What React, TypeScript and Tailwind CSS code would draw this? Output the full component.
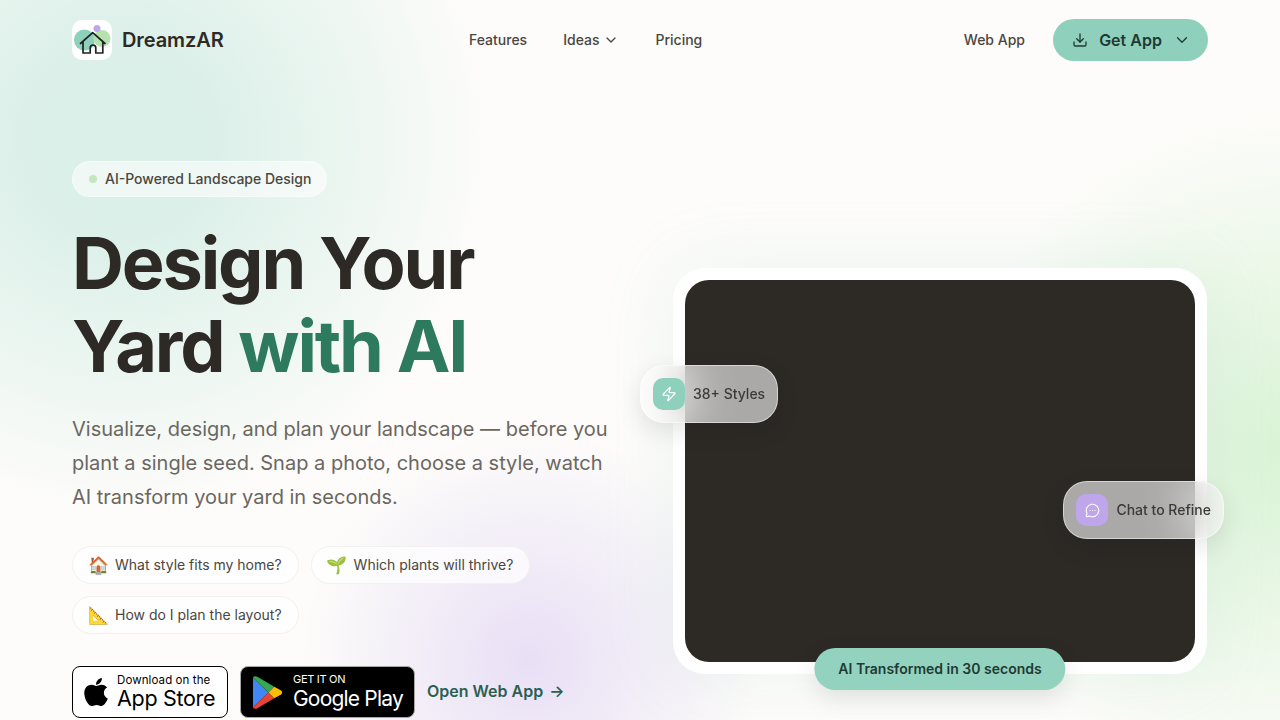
import React from 'react';
import { ChevronDown, Download, MessageCircleMore, Zap } from 'lucide-react';
import { FaApple } from 'react-icons/fa';

const chips = [
  { icon: '🏠', label: 'What style fits my home?' },
  { icon: '🌱', label: 'Which plants will thrive?' },
  { icon: '📐', label: 'How do I plan the layout?' },
];

function Logo() {
  return (
    <svg viewBox="0 0 40 40" className="h-10 w-10 rounded-[10px] bg-white">
      <circle cx="12.500" cy="20" r="10.500" fill="#8fd0bc" />
      <circle cx="30" cy="18.500" r="8.500" fill="#b5e2ae" />
      <circle cx="25" cy="8.500" r="3.500" fill="#bfa6ea" />
      <path
        d="M8.500 23.500 20.700 12.700 33 23.500M11 21.500V33h7.200v-5a2.800 2.800 0 0 1 5.600 0v5h7V21.500"
        fill="none"
        stroke="#1f2421"
        strokeWidth="1.700"
        strokeLinecap="round"
        strokeLinejoin="round"
      />
    </svg>
  );
}

function PlayMark() {
  return (
    <svg viewBox="0 0 32 36" className="h-[35px] w-[31px] shrink-0">
      <path d="M1 2.500 17 18 1 33.500Z" fill="#4285f4" />
      <path d="M1 2.500C2 1 4 1 5.500 1.800L23 12 17 18Z" fill="#34a853" />
      <path d="M1 33.500C2 35 4 35 5.500 34.200L23 24 17 18Z" fill="#ea4335" />
      <path d="M23 12 30 16C31.500 17 31.500 19 30 20L23 24 17 18Z" fill="#fbbc04" />
    </svg>
  );
}

export default function App() {
  return (
    <div className="relative h-screen overflow-hidden bg-[#fdfcfa] font-['Inter',sans-serif] text-[#2d2a26]">
      {/* soft background blobs */}
      <div className="absolute inset-0 bg-[radial-gradient(circle_at_120px_140px,#dbf0e8_0px,#dcf0e9_100px,rgba(220,240,233,0)_370px),radial-gradient(circle_at_530px_660px,#e8dff5_0px,rgba(232,223,245,0)_230px),radial-gradient(circle_at_1290px_450px,#d9f3d5_0px,rgba(217,243,213,0)_340px)]" />

      <div className="relative px-[72px]">
        <header className="flex h-20 items-center">
          <div className="flex w-[397px] items-center gap-2.5">
            <Logo />
            <span className="text-[20px] font-semibold tracking-[-0.1px]">DreamzAR</span>
          </div>
          <nav className="flex items-center gap-9 text-sm font-medium text-[#4a4640]">
            <span>Features</span>
            <span className="flex items-center gap-1">
              Ideas <ChevronDown size={16} />
            </span>
            <span>Pricing</span>
          </nav>
          <div className="ml-auto flex items-center gap-7">
            <span className="text-sm font-medium text-[#4a4640]">Web App</span>
            <button className="flex h-[42px] w-[155px] items-center justify-center gap-[11px] rounded-full bg-[#8fd0bc] pl-0.5 text-base font-semibold text-[#1f3a33]">
              <Download size={16} />
              Get App
              <ChevronDown size={18} strokeWidth={1.75} />
            </button>
          </div>
        </header>

        <main className="grid grid-cols-[601px_534px] pt-[81px]">
          <div>
            <div className="inline-flex h-9 items-center gap-2 rounded-full border border-white/40 bg-white/55 pr-[15px] pl-4 text-sm font-medium text-[#4a4640]">
              <span className="h-2 w-2 rounded-full bg-[#c4e8be]" />
              AI-Powered Landscape Design
            </div>
            <h1 className="mt-6 text-[72px] leading-[83px] font-bold tracking-[-2.16px]">
              Design Your
              <br />
              Yard <span className="text-[#2d7a5f]">with AI</span>
            </h1>
            <p className="mt-[25px] w-[540px] text-[20px] leading-[34px] text-[#6b6760]">
              Visualize, design, and plan your landscape — before you plant a single seed. Snap a photo, choose a style, watch AI transform your yard in seconds.
            </p>
            <div className="mt-[32px] flex w-[480px] flex-wrap gap-x-3 gap-y-3">
              {chips.map((chip) => (
                <span
                  key={chip.label}
                  className="flex h-[38px] items-center gap-1.5 rounded-full border border-[#f3f1ee] bg-white/70 px-4 text-sm text-[#4a4640]"
                >
                  <span className="-ml-0.5 w-[22px] text-center text-[17px] leading-none">{chip.icon}</span>
                  {chip.label}
                </span>
              ))}
            </div>
            <div className="mt-8 flex items-center gap-3">
              <div className="flex h-[52px] w-[156px] items-center gap-[5px] rounded-lg border border-black bg-white px-[7px] text-black">
                <FaApple size={32} className="shrink-0" />
                <div className="flex flex-col whitespace-nowrap">
                  <span className="text-[11.5px] leading-3 tracking-[0.1px]">Download on the</span>
                  <span className="text-[21.5px] leading-[25px] tracking-[-0.3px]">App Store</span>
                </div>
              </div>
              <div className="flex h-[52px] w-[175px] items-center gap-2.5 rounded-lg border border-[#a6a6a6] bg-black px-[11px] text-white">
                <PlayMark />
                <div className="flex flex-col whitespace-nowrap">
                  <span className="text-[11px] leading-3 tracking-[-0.3px]">GET IT ON</span>
                  <span className="text-[21px] leading-[27px] tracking-[-0.8px]">Google Play</span>
                </div>
              </div>
              <span className="flex items-center gap-1.5 pb-0.5 text-base font-semibold text-[#2d5f50]">
                Open Web App <span>→</span>
              </span>
            </div>
          </div>

          <div className="relative mt-[107px] h-[406px] rounded-[32px] bg-white p-3 shadow-[0_0_70px_rgba(143,208,188,0.16)]">
            <div className="h-full rounded-[24px] bg-[#2d2a26]" />
            <div className="absolute top-[97px] -left-[33px] flex h-[58px] items-center gap-2 rounded-[24px] border border-white/50 bg-white/60 px-3 text-sm font-medium text-[#3d3a36] shadow-[0_8px_24px_rgba(0,0,0,0.1)] backdrop-blur-xl">
              <span className="flex h-8 w-8 items-center justify-center rounded-[10px] bg-[#8fd0bc] text-white">
                <Zap size={16} strokeWidth={1.75} />
              </span>
              38+ Styles
            </div>
            <div className="absolute top-[213px] -right-[17px] flex h-[58px] items-center gap-2 rounded-[24px] border border-white/50 bg-white/60 px-3 text-sm font-medium text-[#3d3a36] shadow-[0_8px_24px_rgba(0,0,0,0.1)] backdrop-blur-xl">
              <span className="flex h-8 w-8 items-center justify-center rounded-[10px] bg-[#bfa6ea] text-white">
                <MessageCircleMore size={15} strokeWidth={1.75} />
              </span>
              Chat to Refine
            </div>
            <div className="absolute -bottom-4 left-1/2 flex h-[42px] -translate-x-1/2 items-center rounded-full bg-[#93d2bf] px-6 text-sm font-semibold whitespace-nowrap text-[#1f3a33] shadow-[0_8px_24px_rgba(0,0,0,0.1)]">
              AI Transformed in 30 seconds
            </div>
          </div>
        </main>
      </div>
    </div>
  );
}
